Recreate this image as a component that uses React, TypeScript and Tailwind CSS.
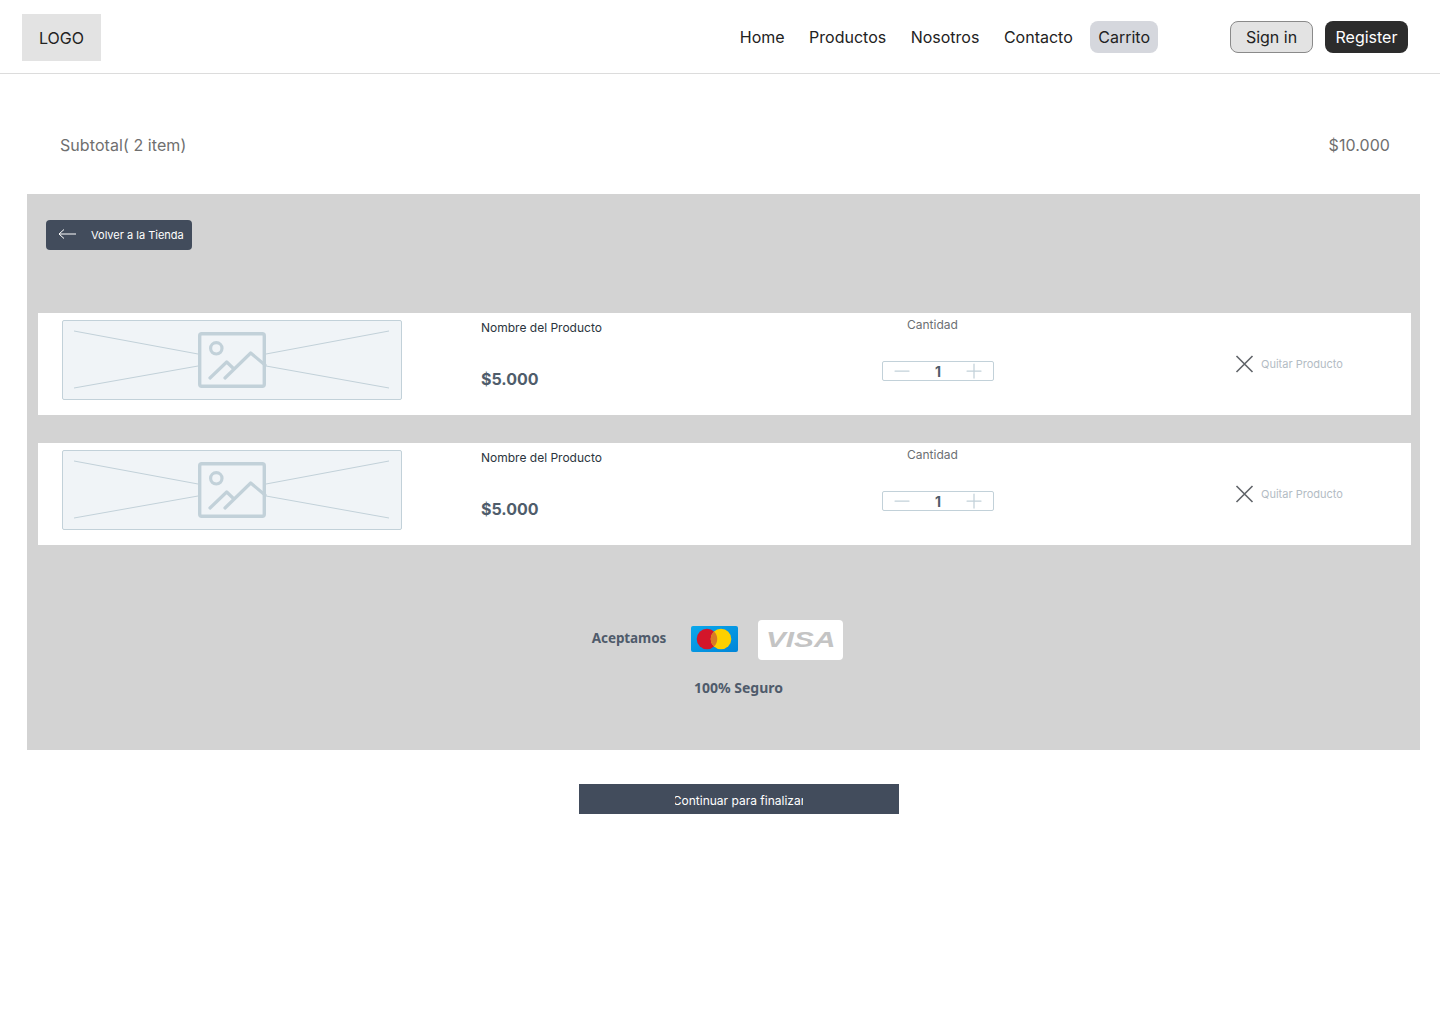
import { Minus, Plus } from 'lucide-react';

const navItems = ['Home', 'Productos', 'Nosotros', 'Contacto'];

function ImagePlaceholder() {
  return (
    <div className="relative h-20 w-[340px] shrink-0 rounded-[2px] border border-[#c2d1d9] bg-[#f0f4f7]">
      <svg className="absolute inset-0 h-full w-full" viewBox="0 0 338 78" fill="none">
        <path d="M11 10 L135 33 M11 67 L135 45 M203 33 L326 10 M203 45 L326 67" stroke="#c2d1d9" strokeWidth="1" />
        <rect x="136.7" y="12.7" width="64.6" height="52.6" rx="2" stroke="#c2d1d9" strokeWidth="3.4" />
        <circle cx="153.3" cy="27.3" r="5.7" stroke="#c2d1d9" strokeWidth="3.2" />
        <path d="M147 57 L163.7 41 L171 48 M162 57 L187.7 32 L202 44" stroke="#c2d1d9" strokeWidth="3.2" strokeLinecap="round" strokeLinejoin="round" />
      </svg>
    </div>
  );
}

function CartRow() {
  return (
    <div className="flex h-[102px] bg-white pl-6 pt-[7px]">
      <ImagePlaceholder />
      <div className="ml-[79px] w-[401px] shrink-0">
        <p className="text-xs leading-4 text-[#2b343d]">Nombre del Producto</p>
        <p className="mt-[31px] text-base leading-6 font-bold text-[#4f5d6b]">$5.000</p>
      </div>
      <div className="w-[353px] shrink-0">
        <p className="-mt-[3px] ml-[25px] text-xs leading-4 text-[#6b6f73]">Cantidad</p>
        <div className="mt-[28px] flex h-5 w-28 items-center justify-between rounded-[2px] border border-[#c2d1d9] px-[7px]">
          <Minus className="h-6 w-6 shrink-0 text-[#c2d1d9]" strokeWidth={1.25} />
          <span className="pt-[1px] text-sm leading-4 font-bold text-[#4f5d6b]">1</span>
          <Plus className="h-6 w-6 shrink-0 text-[#c2d1d9]" strokeWidth={1.25} />
        </div>
      </div>
      <div className="mt-[34px] flex h-5 items-start gap-[6px]">
        <svg className="h-5 w-5" viewBox="0 0 20 20" fill="none">
          <path d="M1.5 2 L17.5 18 M17.5 2 L1.5 18" stroke="#5f6368" strokeWidth="1.6" />
        </svg>
        <span className="text-[11px] leading-5 text-[#b3bcc4]">Quitar Producto</span>
      </div>
    </div>
  );
}

export default function App() {
  return (
    <div className="min-h-[1024px] bg-white font-['Inter',sans-serif]">
      <header className="flex h-[74px] items-center border-b border-[#dcdcdc] pr-8 pl-[22px]">
        <div className="mt-[2px] flex h-[47px] w-[79px] items-center justify-center bg-[#e3e3e3] text-base text-[#222222]">
          LOGO
        </div>
        <nav className="ml-auto flex items-center text-base text-[#222222]">
          <div className="mr-[17.5px] flex gap-[24.5px]">
            {navItems.map((item) => (
              <a key={item}>{item}</a>
            ))}
          </div>
          <a className="flex h-8 items-center rounded-lg bg-[#d5d7dd] px-2">Carrito</a>
        </nav>
        <button className="ml-[72px] h-8 w-[83px] rounded-lg border border-[#8a8a8a] bg-[#e3e3e3] text-base text-[#222222]">
          Sign in
        </button>
        <button className="ml-3 h-8 w-[83px] rounded-lg bg-[#2c2c2c] text-base text-white">Register</button>
      </header>

      <div className="flex h-[120px] items-center justify-between pt-[22px] pr-[50px] pl-[60px] text-base tracking-[0.07px] text-[#6f6f6f]">
        <span>Subtotal( 2 item)</span>
        <span>$10.000</span>
      </div>

      <main className="mr-5 ml-[27px] h-[556px] bg-[#d3d3d3] pt-[26px] pr-[9px] pl-[11px]">
        <button className="ml-2 flex h-[30px] w-[146px] items-center rounded bg-[#424c5c] pl-3 text-[11px] text-white">
          <svg className="mr-[15px] h-[18px] w-[18px] -translate-y-[1px]" viewBox="0 0 18 18" fill="none">
            <path d="M18 9 H1 M6 4.5 L1 9 L6 13.5" stroke="white" strokeWidth="1" />
          </svg>
          Volver a la Tienda
        </button>

        <div className="mt-[63px] flex flex-col gap-7">
          <CartRow />
          <CartRow />
        </div>

        <div className="mt-[74px] flex items-center justify-center pr-[14px]">
          <span className="mr-[25px] -translate-y-[1px] font-['Noto_Sans',sans-serif] text-[13.5px] font-bold tracking-[-0.1px] text-[#4f5b6b]">Aceptamos</span>
          <svg className="mr-5 h-[26px] w-[47px]" viewBox="0 0 47 26">
            <defs>
              <linearGradient id="cardBg" x1="0" y1="0" x2="1" y2="1">
                <stop offset="0" stopColor="#0aa8ec" />
                <stop offset="1" stopColor="#0085d8" />
              </linearGradient>
            </defs>
            <rect width="47" height="26" rx="2" fill="url(#cardBg)" />
            <circle cx="16" cy="13" r="10.3" fill="#d3162a" />
            <circle cx="30" cy="13" r="10.3" fill="#fdd000" />
            <path d="M23 5.5 A10.3 10.3 0 0 1 23 20.5 A10.3 10.3 0 0 1 23 5.5 Z" fill="#d87a25" />
          </svg>
          <div className="flex h-10 w-[85px] translate-y-[1px] items-center justify-center rounded bg-white">
            <span className="scale-x-[1.35] font-['Liberation_Sans',sans-serif] text-[22px] leading-none font-bold text-[#c4c4c4] italic">VISA</span>
          </div>
        </div>
        <p className="mt-[19px] pl-[28px] text-center font-['Noto_Sans',sans-serif] text-sm font-bold text-[#4f5b6b]">100% Seguro</p>
      </main>

      <div className="mt-[34px] flex justify-center pl-[38px]">
        <button className="flex h-[30px] w-80 items-center justify-center bg-[#424c5c] pt-[3px] text-xs text-white">
          <span className="flex w-[128px] justify-center overflow-hidden whitespace-nowrap">Continuar para finalizar</span>
        </button>
      </div>
    </div>
  );
}
